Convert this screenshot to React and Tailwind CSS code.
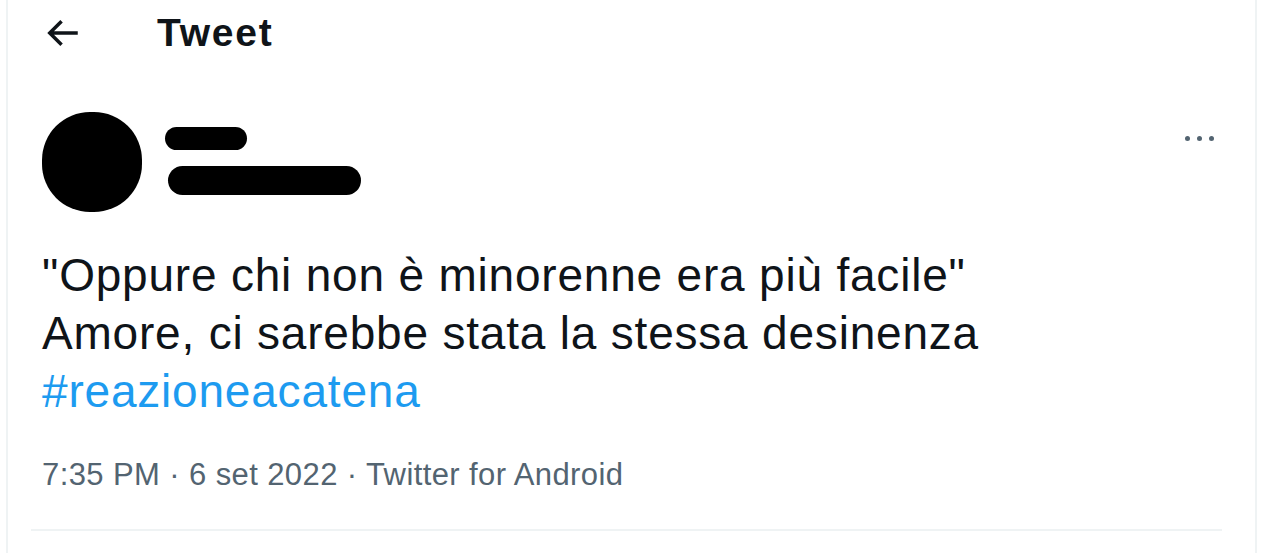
export default function App() {
  return (
    <div className="h-[553px] w-[1280px] overflow-hidden bg-white font-['Liberation_Sans',Arial,sans-serif] text-[#0f1419]">
      <div className="ml-[6px] h-full w-[1251px] border-x-2 border-[#eff3f4]">
        {/* header */}
        <div className="flex h-[66px] items-center pl-[33px]">
          <svg viewBox="0 0 24 24" className="h-[42px] w-[42px]" fill="#0f1419">
            <path d="M7.414 13l5.043 5.04-1.414 1.42L3.586 12l7.457-7.46 1.414 1.42L7.414 11H21v2H7.414z" />
          </svg>
          <h1 className="ml-[74px] text-[39px] font-bold tracking-[1.8px]">Tweet</h1>
        </div>

        {/* author */}
        <div className="mt-[46px] flex items-start px-[34px]">
          <div className="h-[100px] w-[100px] rounded-[48%] bg-black" />
          <div className="ml-[23px] pt-[15px]">
            <div className="h-[23px] w-[82px] rounded-full bg-black" />
            <div className="mt-[16px] ml-[3px] h-[29px] w-[193px] rounded-full bg-black" />
          </div>
          <div className="ml-auto mt-[24px] mr-[7px] flex gap-[7px]">
            <span className="h-[5px] w-[5px] rounded-full bg-[#536471]" />
            <span className="h-[5px] w-[5px] rounded-full bg-[#536471]" />
            <span className="h-[5px] w-[5px] rounded-full bg-[#536471]" />
          </div>
        </div>

        {/* text */}
        <div className="mt-[34px] px-[34px] text-[46px] leading-[58px] tracking-[0.8px]">
          <p>"Oppure chi non è minorenne era più facile"</p>
          <p>Amore, ci sarebbe stata la stessa desinenza</p>
          <p className="text-[#1d9bf0]">#reazioneacatena</p>
        </div>

        {/* meta */}
        <div className="mt-[32px] px-[34px] text-[31px] tracking-[0.4px] text-[#536471]">
          7:35 PM · 6 set 2022 · Twitter for Android
        </div>

        <div className="ml-[23px] mr-[33px] mt-[30px] h-[2px] bg-[#eff3f4]" />
      </div>
    </div>
  );
}
